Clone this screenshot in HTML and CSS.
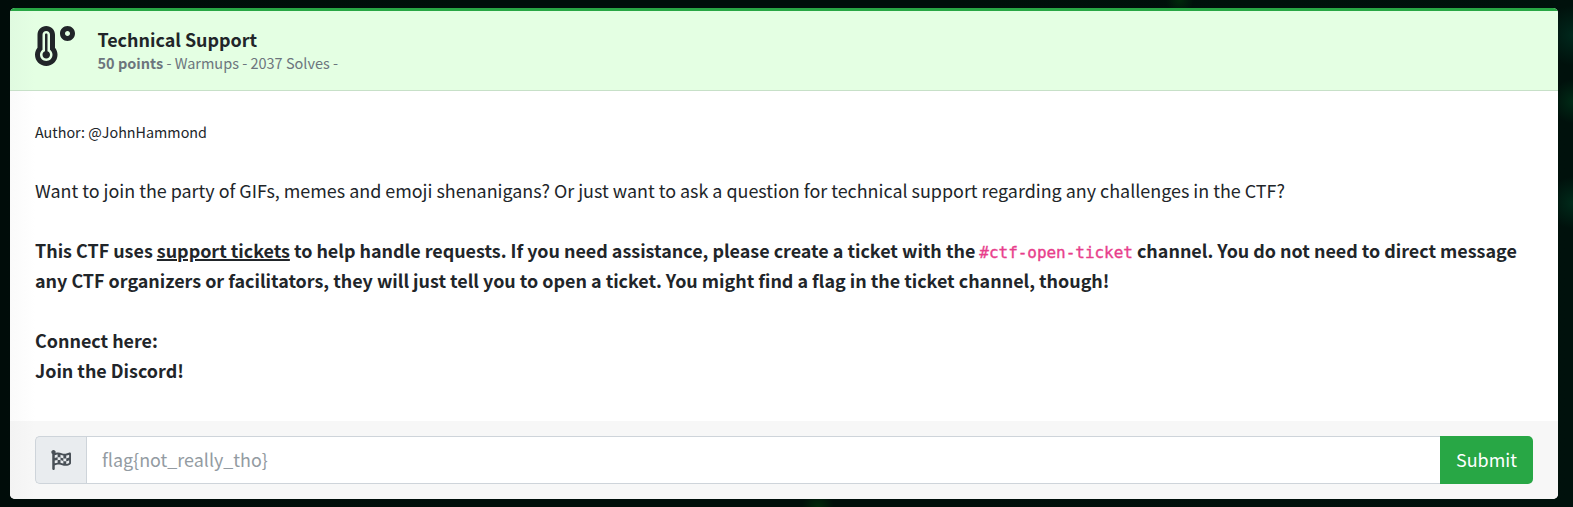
FILE: index.html
```html
<!DOCTYPE html>
<html lang="en">
<head>
<meta charset="utf-8">
<title>Technical Support</title>
<link rel="stylesheet" href="styles.css">
</head>
<body>
<main class="card">
  <header class="card-header">
    <svg class="temp" viewBox="0 0 512 512"><path d="M416 0c-52.9 0-96 43.1-96 96s43.1 96 96 96 96-43.1 96-96-43.1-96-96-96zm0 128c-17.7 0-32-14.3-32-32s14.3-32 32-32 32 14.3 32 32-14.3 32-32 32zm-160-16C256 50.1 205.9 0 144 0S32 50.1 32 112v166.5C12.3 303.2 0 334 0 368c0 79.5 64.5 144 144 144s144-64.5 144-144c0-34-12.3-64.9-32-89.5V112zM144 448c-44.1 0-80-35.9-80-80 0-25.5 12.2-48.9 32-63.8V112c0-26.5 21.5-48 48-48s48 21.5 48 48v192.2c19.8 14.8 32 38.3 32 63.8 0 44.1-35.9 80-80 80zm16-125.1V112c0-8.8-7.2-16-16-16s-16 7.2-16 16v210.9c-18.6 6.6-32 24.2-32 45.1 0 26.5 21.5 48 48 48s48-21.5 48-48c0-20.9-13.4-38.5-32-45.1z"/></svg>
    <div class="heading">
      <h1 class="title">Technical Support</h1>
      <div class="meta"><b>50 points</b> - Warmups - 2037 Solves -</div>
    </div>
  </header>
  <section class="card-body">
    <p class="author">Author: @JohnHammond</p>
    <p class="intro">Want to join the party of GIFs, memes and emoji shenanigans? Or just want to ask a question for technical support regarding any challenges in the CTF?</p>
    <p class="strong">This CTF uses <u>support tickets</u> to help handle requests. If you need assistance, please create a ticket with the <code>#ctf-open-ticket</code> channel. You do not need to direct message<br>any CTF organizers or facilitators, they will just tell you to open a ticket. You might find a flag in the ticket channel, though!</p>
    <p class="strong">Connect here:<br>Join the Discord!</p>
  </section>
  <footer class="card-footer">
    <span class="addon"><svg class="flag" viewBox="0 0 512 512"><path d="M243.2 189.9V258c26.1 5.9 49.3 15.6 73.6 22.3v-68.2c-26-5.8-49.4-15.5-73.6-22.2zm223.3-123c-34.3 15.9-76.5 31.9-117 31.9C296 98.8 251.7 64 184.3 64c-25 0-47.3 4.4-68 12 2.8-7.3 4.1-15.2 3.6-23.6C118.1 24 94.8 1.2 66.3 0 34.3-1.3 8 24.3 8 56c0 19 9.5 35.8 24 45.9V488c0 13.3 10.7 24 24 24h16c13.3 0 24-10.7 24-24v-94.4c28.3-12.1 63.6-22.1 114.4-22.1 53.6 0 97.8 34.8 165.2 34.8 48.2 0 86.7-16.3 122.5-40.9 8.7-6 13.8-15.8 13.8-26.4V95.9c.1-23.3-24.2-38.8-45.4-29zM169.6 325.5c-25.8 2.7-50 8.2-73.6 16.6v-70.5c26.2-9.3 47.5-15 73.6-17.4v71.3zM464 191c-23.6 9.8-46.3 19.5-73.6 23.9V286c24.8-3.4 51.4-11.8 73.6-26v70.5c-25.1 16.1-48.5 24.7-73.6 27.1V286c-27 3.7-47.9 1.5-73.6-5.6v67.4c-23.9-7.4-47.3-16.7-73.6-21.3V258c-19.7-4.4-40.8-6.8-73.6-3.8v-70c-22.4 3.1-44.6 10.2-73.6 20.9v-70.5c33.2-12.2 50.1-19.8 73.6-22v71.6c27-3.7 48.4-1.3 73.6 5.7v-67.4c23.7 7.4 47.2 16.7 73.6 21.3v68.4c23.7 5.3 47.6 6.9 73.6 2.7V143c27-4.8 52.3-13.6 73.6-22.5z"/></svg></span>
    <input class="answer" type="text" placeholder="flag{not_really_tho}">
    <button class="submit" type="button">Submit</button>
  </footer>
</main>
</body>
</html>
```
FILE: styles.css
```css
* { box-sizing: border-box; }
body {
  margin: 0;
  height: 507px;
  padding: 8px 15px 8px 10px;
  overflow: hidden;
  background:
    radial-gradient(circle at 100% 7%, #00281c 0, transparent 30px),
    radial-gradient(circle at 100% 20%, #002a16 0, transparent 22px),
    radial-gradient(circle at 100% 40%, #002a1a 0, transparent 26px),
    radial-gradient(circle at 75% 0, #00280a 0, transparent 14px),
    radial-gradient(circle at 52% 100%, #00280a 0, transparent 16px),
    linear-gradient(90deg, #000c09, #000f0a 30%, #000f0a 60%, #00110c);
  color: #212529;
  font: 17.91px/30px "Noto Sans CJK SC", "Noto Sans", sans-serif;
}
.card {
  display: flex;
  flex-direction: column;
  height: 491px;
  border-radius: 5px;
  overflow: hidden;
  background: #fff;
}
.card-header {
  display: flex;
  height: 83px;
  padding: 15px 25px 0;
  gap: 22.5px;
  border-top: 3px solid #28a745;
  border-bottom: 1px solid #c7e0c8;
  background: linear-gradient(90deg, #e0fae0, #e4ffe3 25px);
}
.temp { width: 40px; height: 40px; fill: #212529; }
.heading { padding-top: 2px; white-space: nowrap; }
.title { margin: 0; font-size: 17.91px; line-height: 22px; font-weight: 700; }
.meta { font-size: 14.5px; line-height: 26px; color: #6c757d; }
.card-body {
  flex: 1;
  padding: 26px 25px 0;
  white-space: nowrap;
  background: linear-gradient(90deg, #fafafa, #fff 25px);
}
.card-body p { margin: 0 0 30px; }
.card-body .author { font-size: 14.33px; margin-bottom: 28px; }
.strong { font-weight: 700; }
.strong u { text-decoration-thickness: 2px; }
code {
  font: 400 16px/20px "DejaVu Sans Mono", monospace;
  letter-spacing: -0.04px;
  -webkit-text-stroke: 0.35px #e83e8c;
  color: #e83e8c;
}
.card-footer {
  display: flex;
  height: 78px;
  padding: 15px 25px;
  background: linear-gradient(90deg, #f3f3f3, #f7f7f7 25px);
}
.addon {
  display: flex;
  align-items: center;
  justify-content: center;
  width: 51px;
  padding-bottom: 1px;
  border: 1px solid #ced4da;
  border-right: 0;
  border-radius: 5px 0 0 5px;
  background: #e9ecef;
}
.flag { width: 20px; height: 20px; fill: #495057; }
.answer {
  flex: 1;
  min-width: 0;
  padding: 0 15px 2px;
  border: 1px solid #ced4da;
  border-right: 0;
  background: #fff;
  font: inherit;
}
.answer::placeholder { color: #939ba2; opacity: 1; }
.submit {
  width: 93px;
  padding: 0 0 2px;
  border: 0;
  border-radius: 0 5px 5px 0;
  background: #28a745;
  color: #fff;
  font: inherit;
}
```
